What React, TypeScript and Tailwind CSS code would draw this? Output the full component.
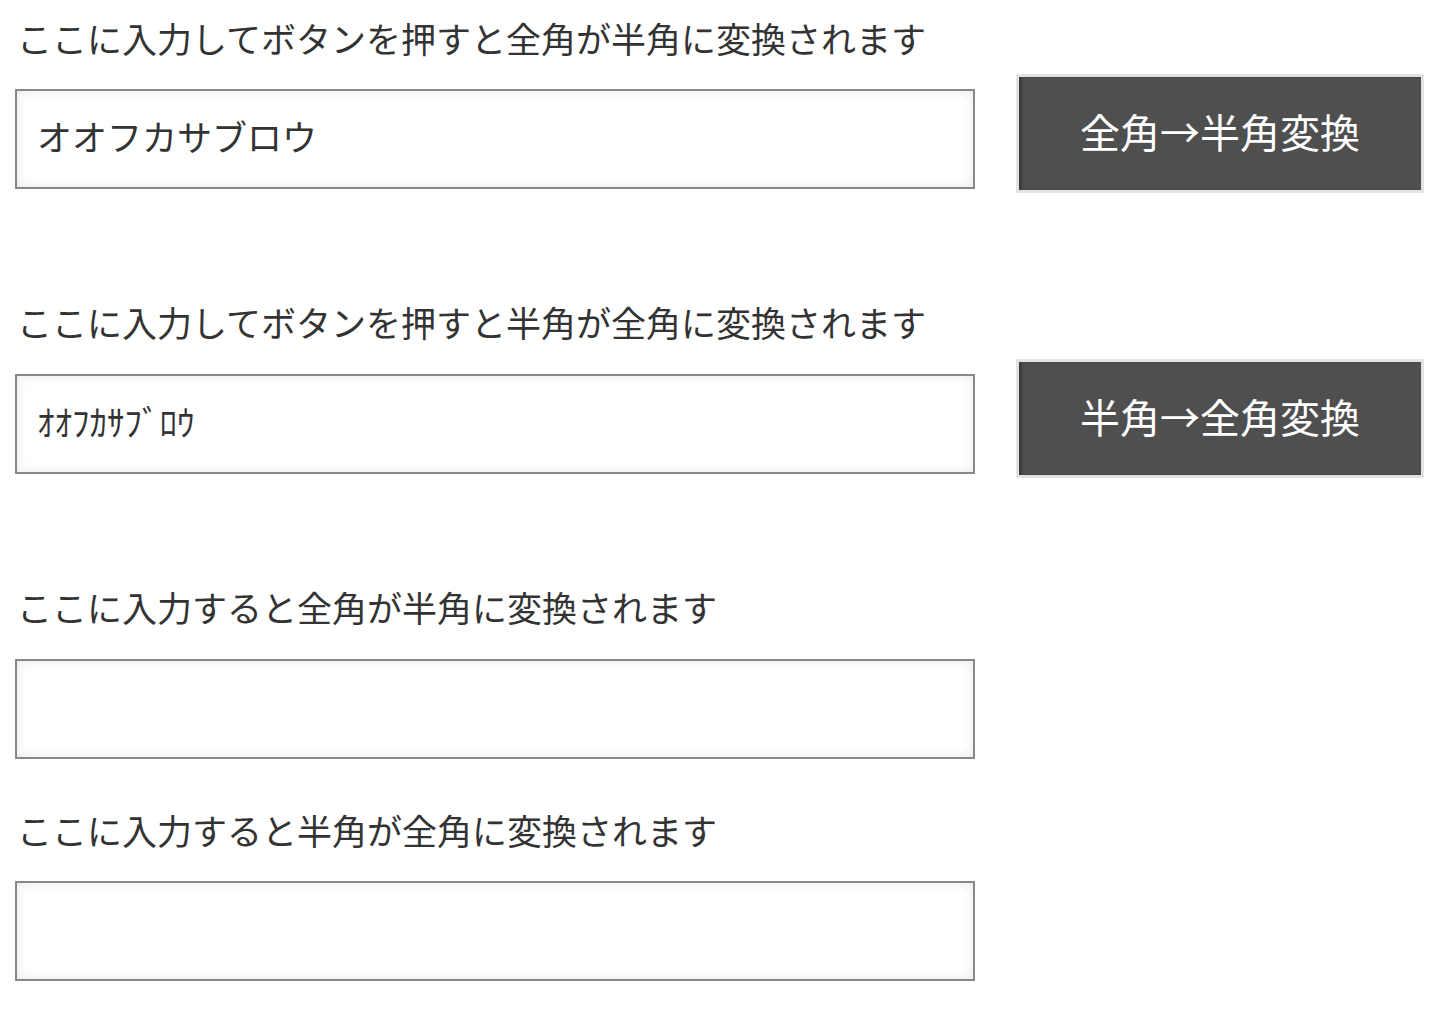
import { useState } from "react";

function Field({ value, onChange }: { value: string; onChange: (v: string) => void }) {
  return (
    <input
      type="text"
      value={value}
      onChange={(e) => onChange(e.target.value)}
      className="block h-[100px] w-[960px] shrink-0 border-2 border-[#888888] bg-white px-[20px] pb-[7px] text-[35px] text-[#333333] shadow-[inset_0_0_12px_rgba(0,0,0,0.09)] outline-none"
    />
  );
}

function ConvertButton({ label }: { label: string }) {
  return (
    <button
      type="button"
      className="ml-[41px] -mt-[15px] h-[119px] w-[408px] shrink-0 border-[3px] border-[#e1e4e4] bg-[#4f4f4f] pb-[5px] text-[40px] text-white shadow-[inset_3px_0_2px_rgba(0,0,0,0.25)]"
    >
      {label}
    </button>
  );
}

export default function App() {
  const [a, setA] = useState("オオフカサブロウ");
  const [b, setB] = useState("ｵｵﾌｶｻﾌﾞﾛｳ");
  const [c, setC] = useState("");
  const [d, setD] = useState("");

  return (
    <div
      className="min-h-screen bg-white pl-[15px] pt-[13px] text-[#333333]"
      style={{ fontFamily: '"Noto Sans CJK JP", "Noto Sans", sans-serif' }}
    >
      {/* ボタンで変換 */}
      <p className="pl-[2px] text-[35px] leading-[50px]">ここに入力してボタンを押すと全角が半角に変換されます</p>
      <div className="mt-[26px] flex items-start">
        <Field value={a} onChange={setA} />
        <ConvertButton label="全角→半角変換" />
      </div>

      <p className="mt-[104px] pl-[2px] text-[35px] leading-[50px]">ここに入力してボタンを押すと半角が全角に変換されます</p>
      <div className="mt-[27px] flex items-start">
        <Field value={b} onChange={setB} />
        <ConvertButton label="半角→全角変換" />
      </div>

      {/* 入力時に変換 */}
      <p className="mt-[104px] pl-[2px] text-[35px] leading-[50px]">ここに入力すると全角が半角に変換されます</p>
      <div className="mt-[27px]">
        <Field value={c} onChange={setC} />
      </div>

      <p className="mt-[46px] pl-[2px] text-[35px] leading-[50px]">ここに入力すると半角が全角に変換されます</p>
      <div className="mt-[26px]">
        <Field value={d} onChange={setD} />
      </div>
    </div>
  );
}
